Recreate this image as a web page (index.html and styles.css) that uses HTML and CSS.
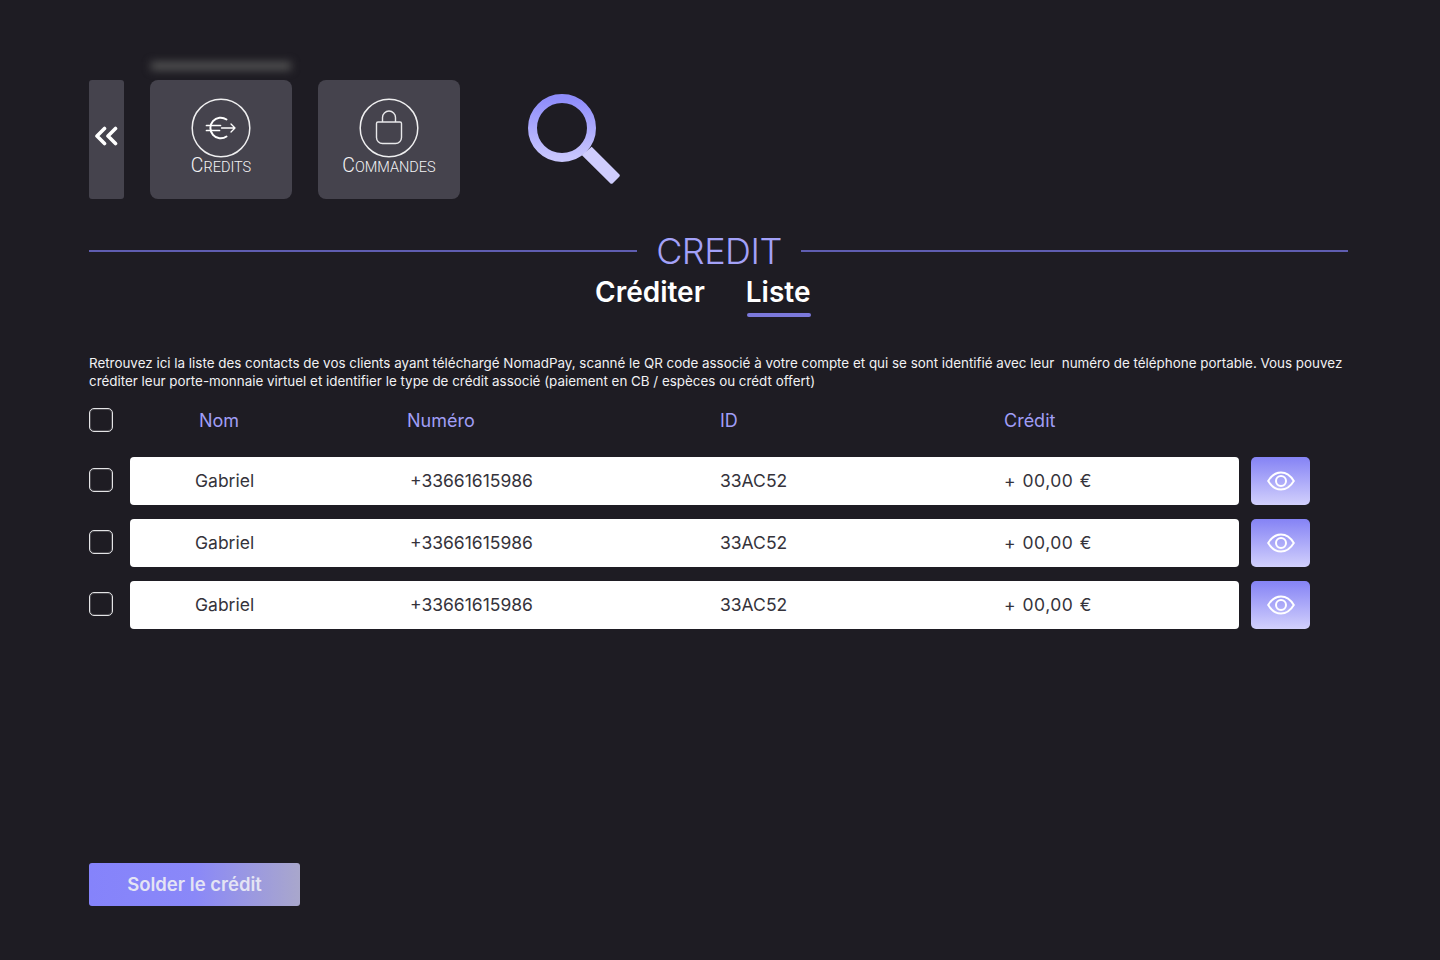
FILE: index.html
```html
<!DOCTYPE html>
<html lang="fr">
<head>
    <meta charset="UTF-8">
    <meta name="viewport" content="width=device-width, initial-scale=1.0">
    <title>Crédit</title>
    <link rel="stylesheet" href="styles.css">
</head>
<body>
    <svg width="0" height="0" class="defs">
        <defs>
            <linearGradient id="searchGrad" x1="0" y1="0" x2="0" y2="1">
                <stop offset="0" stop-color="#8f8dfb"/>
                <stop offset="1" stop-color="#c8c6fd"/>
            </linearGradient>
        </defs>
    </svg>

    <div class="container">
        <!-- Navigation -->
        <div class="nav">
            <button class="back-btn">
                <svg width="24" height="20" viewBox="0 0 24 20" fill="none" stroke="#fff" stroke-width="3.6" stroke-linecap="round" stroke-linejoin="round">
                    <path d="M10.5 2.5 3 10l7.5 7.5"/>
                    <path d="M21.5 2.5 14 10l7.5 7.5"/>
                </svg>
            </button>
            <div class="nav-card">
                <span class="blur-label"></span>
                <svg class="nav-circle" width="60" height="60" viewBox="0 0 60 60" fill="none" stroke="#fff" stroke-linecap="round" stroke-linejoin="round">
                    <circle cx="30" cy="30" r="28.8" stroke="#efeff0" stroke-width="1.5"/>
                    <path d="M35.500 21.500A10.300 10.300 0 1 0 35.500 38.500" stroke-width="2"/>
                    <path d="M15.500 27.500h14M15.500 32.500h13" stroke-width="1.700"/>
                    <path d="M30.500 30h13.500M40 26l4 4-4 4" stroke-width="1.300"/>
                </svg>
                <span class="nav-label">Credits</span>
            </div>
            <div class="nav-card">
                <svg class="nav-circle" width="60" height="60" viewBox="0 0 60 60" fill="none" stroke="#e8e8ea" stroke-linejoin="round">
                    <circle cx="30" cy="30" r="28.8" stroke="#efeff0" stroke-width="1.5"/>
                    <path d="M19 24h22a1.500 1.500 0 0 1 1.500 1.500v14a6 6 0 0 1-6 6h-13a6 6 0 0 1-6-6v-14A1.500 1.500 0 0 1 19 24Z" stroke-width="1.400"/>
                    <path d="M23.500 24v-4.500a6.500 6.500 0 0 1 13 0V24" stroke-width="1.400"/>
                </svg>
                <span class="nav-label">Commandes</span>
            </div>
            <svg class="search-icon" width="92" height="90" viewBox="0 0 92 90" fill="none">
                <circle cx="34" cy="34" r="29.500" stroke="url(#searchGrad)" stroke-width="9"/>
                <path d="M53.700 61 63.700 52.700 91 80a2 2 0 0 1 0 3l-6 6a2 2 0 0 1-3 0Z" fill="#cfcdfd"/>
            </svg>
        </div>

        <!-- Titre -->
        <div class="title-row">
            <span class="title-line"></span>
            <h1>CREDIT</h1>
            <span class="title-line title-line-right"></span>
        </div>

        <!-- Onglets -->
        <div class="tabs">
            <span class="tab">Créditer</span>
            <span class="tab tab-active">Liste</span>
        </div>

        <p class="intro">Retrouvez ici la liste des contacts de vos clients ayant téléchargé NomadPay, scanné le QR code associé à votre compte et qui se sont identifié avec leur&nbsp; numéro de téléphone portable. Vous pouvez créditer leur porte-monnaie virtuel et identifier le type de crédit associé (paiement en CB / espèces ou crédt offert)</p>

        <!-- Tableau -->
        <div class="table-head">
            <span class="check"></span>
            <div class="cols cols-head">
                <span>Nom</span>
                <span>Numéro</span>
                <span>ID</span>
                <span>Crédit</span>
            </div>
        </div>

        <div class="table-row">
            <span class="check check-row"></span>
            <div class="cols cols-body">
                <span>Gabriel</span>
                <span>+33661615986</span>
                <span>33AC52</span>
                <span class="amount">+ 00,00 €</span>
            </div>
            <button class="eye-btn">
                <svg width="28" height="20" viewBox="0 0 28 20" fill="none" stroke="#fff" stroke-width="2">
                    <path d="M1.200 10C4.500 4.500 9 1.500 14 1.500S23.500 4.500 26.800 10C23.500 15.500 19 18.500 14 18.500S4.500 15.500 1.200 10Z"/>
                    <circle cx="14" cy="10" r="5"/>
                </svg>
            </button>
        </div>
        <div class="table-row">
            <span class="check check-row"></span>
            <div class="cols cols-body">
                <span>Gabriel</span>
                <span>+33661615986</span>
                <span>33AC52</span>
                <span class="amount">+ 00,00 €</span>
            </div>
            <button class="eye-btn">
                <svg width="28" height="20" viewBox="0 0 28 20" fill="none" stroke="#fff" stroke-width="2">
                    <path d="M1.200 10C4.500 4.500 9 1.500 14 1.500S23.500 4.500 26.800 10C23.500 15.500 19 18.500 14 18.500S4.500 15.500 1.200 10Z"/>
                    <circle cx="14" cy="10" r="5"/>
                </svg>
            </button>
        </div>
        <div class="table-row">
            <span class="check check-row"></span>
            <div class="cols cols-body">
                <span>Gabriel</span>
                <span>+33661615986</span>
                <span>33AC52</span>
                <span class="amount">+ 00,00 €</span>
            </div>
            <button class="eye-btn">
                <svg width="28" height="20" viewBox="0 0 28 20" fill="none" stroke="#fff" stroke-width="2">
                    <path d="M1.200 10C4.500 4.500 9 1.500 14 1.500S23.500 4.500 26.800 10C23.500 15.500 19 18.500 14 18.500S4.500 15.500 1.200 10Z"/>
                    <circle cx="14" cy="10" r="5"/>
                </svg>
            </button>
        </div>

        <button class="solder-btn">Solder le crédit</button>
    </div>
</body>
</html>
```

FILE: styles.css
```css
* {
    margin: 0;
    padding: 0;
    box-sizing: border-box;
}

body {
    font-family: Inter, "Noto Sans", sans-serif;
    background-color: #1e1c23;
    color: #fff;
    height: 960px;
    overflow: hidden;
}

.defs {
    display: block;
    height: 0;
}

.container {
    display: flex;
    flex-direction: column;
    height: 960px;
    padding: 80px 92px 54px 89px;
}

button {
    border: none;
    cursor: pointer;
    font-family: inherit;
}

/* Navigation */
.nav {
    display: flex;
    align-items: flex-start;
    height: 119px;
}

.back-btn {
    width: 35px;
    height: 119px;
    margin-right: 26px;
    background-color: #45434d;
    border-radius: 3px;
    display: flex;
    align-items: center;
    justify-content: center;
    padding: 0 2px 7px 0;
}

.nav-card {
    position: relative;
    width: 142px;
    height: 119px;
    margin-right: 26px;
    padding-top: 18px;
    background-color: #45434d;
    border-radius: 8px;
    display: flex;
    flex-direction: column;
    align-items: center;
}

.blur-label {
    position: absolute;
    top: -18px;
    left: 1px;
    width: 140px;
    height: 8px;
    background-color: #565656;
    filter: blur(4px);
}

.nav-circle {
    flex: none;
    margin-left: -1px;
}

.nav-label {
    display: block;
    font-family: Roboto, "Liberation Sans", sans-serif;
    font-weight: 300;
    font-size: 14.500px;
    line-height: 20px;
    margin-top: -2px;
    color: #f4f4f6;
    text-transform: uppercase;
}

.nav-label::first-letter {
    font-size: 19.500px;
}

.search-icon {
    margin: 14px 0 0 42px;
}

/* Titre */
.title-row {
    display: flex;
    align-items: center;
    margin-top: 30px;
    width: 1259px;
    height: 44px;
}

.title-line {
    width: 548px;
    height: 2px;
    background-color: #5f5db0;
}

.title-line-right {
    width: 547px;
}

h1 {
    width: 164px;
    text-align: center;
    font-size: 36px;
    line-height: 44px;
    font-weight: 300;
    letter-spacing: -0.500px;
    color: #a3a1f8;
}

/* Onglets */
.tabs {
    display: flex;
    margin: 1px 0 0 506px;
    height: 40px;
    gap: 41px;
}

.tab {
    font-size: 28px;
    line-height: 36px;
    font-weight: 600;
    position: relative;
}

.tab-active::after {
    content: "";
    position: absolute;
    left: 1px;
    right: 0;
    bottom: -3px;
    height: 4px;
    border-radius: 2px;
    background-color: #7c79dc;
}

.intro {
    width: 1259px;
    margin-top: 40px;
    font-size: 13.400px;
    line-height: 18px;
    color: #f1f1f3;
}

/* Tableau */
.table-head {
    display: flex;
    align-items: center;
    margin-top: 18px;
    height: 24px;
    margin-bottom: 25px;
}

.check {
    flex: none;
    width: 24px;
    height: 24px;
    border: 1px solid #e4e4e6;
    box-shadow: inset 0 0 0 1px rgba(255, 255, 255, 0.2);
    border-radius: 5px;
}

.check-row {
    margin-top: -2px;
}

.cols {
    display: grid;
    align-items: center;
    margin-left: 17px;
}

.cols-head {
    width: 1109px;
    padding-left: 69px;
    grid-template-columns: 208px 313px 284px 1fr;
    font-size: 18px;
    color: #a09ef6;
}

.table-row {
    display: flex;
    align-items: center;
    height: 48px;
    margin-bottom: 14px;
}

.cols-body {
    width: 1109px;
    height: 48px;
    padding: 0 0 2px 65px;
    grid-template-columns: 215px 310px 284px 1fr;
    font-size: 17.500px;
    background-color: #fff;
    border-radius: 4px;
    color: #35333b;
}

.amount {
    letter-spacing: 0.500px;
    word-spacing: 1px;
}

.eye-btn {
    width: 59px;
    height: 48px;
    margin-left: 12px;
    border-radius: 5px;
    background: linear-gradient(180deg, #8583f5 0%, #d2d0fc 100%);
    display: flex;
    align-items: center;
    justify-content: center;
}

.solder-btn {
    margin-top: auto;
    width: 211px;
    height: 43px;
    padding-bottom: 2px;
    border-radius: 3px;
    background: linear-gradient(90deg, #8583fb 0%, #8a88f8 50%, #a9a7cc 100%);
    color: #e4e4f4;
    font-size: 18.500px;
    font-weight: 600;
}
```
